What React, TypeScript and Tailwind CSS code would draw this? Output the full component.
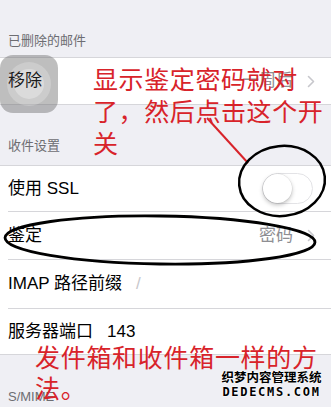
import React from "react"

const Chevron = () => (
  <svg width="8" height="13" viewBox="0 0 8 13" className="shrink-0">
    <path
      d="M1.5 1.5l5 5-5 5"
      fill="none"
      stroke="#c7c7cc"
      strokeWidth="1.6"
      strokeLinecap="round"
      strokeLinejoin="round"
    />
  </svg>
)

const Toggle = () => (
  <div className="relative w-[51px] h-[31px] rounded-full border border-[#e3e3e6] bg-white">
    <div className="absolute left-0 top-0 w-[29px] h-[29px] rounded-full bg-white shadow-[0_2px_4px_rgba(0,0,0,0.25),0_0_0_0.5px_rgba(0,0,0,0.08)]" />
  </div>
)

const App: React.FC = () => {
  return (
    <div
      className="relative w-[331px] h-[407px] overflow-hidden bg-[#efeff4] text-black"
      style={{ fontFamily: '"Liberation Sans", "Noto Sans CJK SC", sans-serif' }}
    >
      {/* deleted mail */}
      <div className="h-[57px] flex items-end px-2 pb-[8px] text-[13px] leading-[16px] text-[#6d6d72]">
        已删除的邮件
      </div>
      <div className="bg-white border-y border-[#d6d6da]">
        <div className="h-[46px] flex items-center pl-2 pr-[16px] text-[17px]">
          <span className="flex-1 relative z-10 text-[#1c1c1c]">移除</span>
          <span className="text-[#8e8e93] mr-[14px]">一周后</span>
          <Chevron />
        </div>
      </div>

      {/* incoming settings */}
      <div className="h-[60px] flex items-end px-2 pb-[11px] text-[13px] leading-[16px] text-[#6d6d72]">
        收件设置
      </div>
      <div className="bg-white border-y border-[#d6d6da] text-[17px]">
        <div className="ml-2 h-[46px] flex items-center pr-[18px] border-b border-[#d6d6da]">
          <span className="flex-1">使用 SSL</span>
          <Toggle />
        </div>
        <div className="ml-2 h-[48px] flex items-center pr-[16px] border-b border-[#d6d6da]">
          <span className="flex-1">鉴定</span>
          <span className="text-[#8e8e93] mr-[14px]">密码</span>
          <Chevron />
        </div>
        <div className="ml-2 h-[49px] flex items-center border-b border-[#d6d6da]">
          <span>IMAP 路径前缀</span>
          <span className="ml-[14px] text-[#c7c7cc]">/</span>
        </div>
        <div className="ml-2 h-[45px] flex items-center">
          <span>服务器端口</span>
          <span className="ml-[14px]">143</span>
        </div>
      </div>

      <div className="h-[52px] flex items-end px-2 pb-[2px] text-[13px] leading-[16px] text-[#6d6d72]">
        S/MIME
      </div>

      {/* assistive touch button */}
      <div className="absolute left-0 top-[55px] w-[58px] h-[58px] rounded-[13px] bg-[rgba(110,110,110,0.45)] flex items-center justify-center">
        <div className="w-[44px] h-[44px] rounded-full bg-[rgba(255,255,255,0.22)] flex items-center justify-center">
          <div className="w-[30px] h-[30px] rounded-full bg-[rgba(255,255,255,0.3)]" />
        </div>
      </div>

      {/* annotations */}
      <svg className="absolute inset-0 pointer-events-none" width="331" height="407" viewBox="0 0 331 407">
        <line x1="207" y1="118" x2="248" y2="163" stroke="#d8232a" strokeWidth="2" />
        <ellipse cx="282" cy="181" rx="43" ry="35" fill="none" stroke="#000" strokeWidth="2.5" transform="rotate(-6 282 181)" />
        <ellipse cx="160" cy="240" rx="155" ry="24" fill="none" stroke="#000" strokeWidth="2.8" transform="rotate(0.8 160 240)" />
      </svg>

      <div
        className="absolute left-[93px] top-[62px] text-[25px] leading-[32px] tracking-[0.6px] text-[#d8232a] whitespace-nowrap"
        style={{ fontFamily: '"Noto Sans CJK SC", sans-serif' }}
      >
        显示鉴定密码就对
        <br />
        了，然后点击这个开
        <br />
        关
      </div>

      <div
        className="absolute left-[35px] top-[341px] text-[25px] leading-[31px] tracking-[0.7px] text-[#d8232a] whitespace-nowrap"
        style={{ fontFamily: '"Noto Sans CJK SC", sans-serif' }}
      >
        发件箱和收件箱一样的方
        <br />
        法。
      </div>

      {/* watermark */}
      <div className="absolute left-[221px] top-[369px] w-[101px] flex flex-col items-center font-bold text-black [text-shadow:0_0_1px_#fff,0_0_2px_#fff,0_0_2px_#fff]">
        <span className="text-[12.5px] leading-[16px]" style={{ fontFamily: '"Noto Sans CJK SC", sans-serif' }}>
          织梦内容管理系统
        </span>
        <span className="text-[12px] leading-[14px] tracking-[1.7px]" style={{ fontFamily: '"DejaVu Sans Mono", monospace' }}>
          DEDECMS.COM
        </span>
      </div>
    </div>
  )
}

export default App
